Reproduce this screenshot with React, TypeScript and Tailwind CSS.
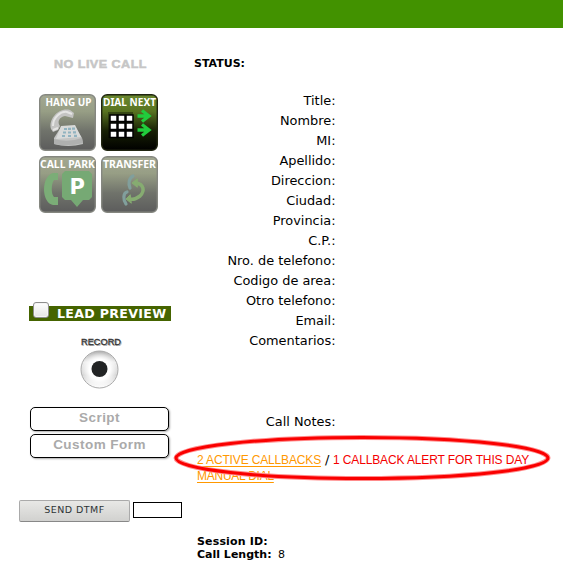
import React from "react";

const fields = ["Title:", "Nombre:", "MI:", "Apellido:", "Direccion:", "Ciudad:", "Provincia:", "C.P.:", "Nro. de telefono:", "Codigo de area:", "Otro telefono:", "Email:", "Comentarios:"];

function Tile({ id, label, width, active = false, children }: { id: string; label: string; width: number; active?: boolean; children: React.ReactNode }) {
  return (
    <svg className="block h-[57px] w-[57px]" viewBox="0 0 57 57">
      <defs>
        <linearGradient id={id} x1="0" y1="0" x2="0" y2="1">
          <stop offset="0" stopColor={active ? "#6b8930" : "#a3a892"} />
          <stop offset=".3" stopColor={active ? "#587321" : "#979e85"} />
          <stop offset=".65" stopColor={active ? "#172004" : "#70736b"} />
          <stop offset="1" stopColor={active ? "#000000" : "#5c5c5c"} />
        </linearGradient>
      </defs>
      <rect x=".7" y=".7" width="55.6" height="55.6" rx="5.5" fill={`url(#${id})`} stroke={active ? "#202511" : "#858780"} strokeWidth="1.4" />
      {children}
      <text x={(57 - width) / 2 + (id === "hang" ? 1 : 0)} y="12" textLength={width} lengthAdjust="spacingAndGlyphs" fontSize="10.3" fontWeight="bold" fill="white" className="font-['Noto_Sans','DejaVu_Sans',sans-serif]">{label}</text>
    </svg>
  );
}

function Telephone() {
  return (
    <g>
      <path d="M22 33 L36 32 L43 44 L44 50 Q29 54 15 50 L15 44Z" fill="#c3c4c3" />
      <path d="M22 32 L36 31 L42 43 L17 45Z" fill="#d8dad9" />
      <path d="M15 45 Q29 49 43 44 L44 49 Q30 53 15 50Z" fill="#afb0af" />
      <path d="M12 35 C9 25 20 13 31 16 L35 19 L34 24 L26 22 C20 23 18 28 21 32 L19 36 L14 38Z" fill="#c4c4c3" />
      <path d="M14 32 C14 23 22 17 28 18 L33 20 M14 36L19 34" fill="none" stroke="#e5e5e4" strokeWidth="2" />
      <path d="M25 35h3m1-.2h3m1-.2h3M24 38.5h3m2 0h3m2-.2h3M23 42h3m3 0h3m3-.2h3" stroke="#91b3c0" strokeWidth="2.2" />
    </g>
  );
}

function Arrow({ y }: { y: number }) {
  return <path d={`M36.5 ${y}h9M41 ${y - 5.5}l7 5.5-7 5.5`} fill="none" stroke="#21cc3c" strokeWidth="3.3" strokeLinejoin="miter" />;
}

export default function App() {
  return (
    <div className="relative h-[588px] w-[563px] overflow-hidden bg-white font-['DejaVu_Sans',sans-serif] text-black">
      <header className="h-7 bg-[#429200]" />
      <main className="flex h-[560px]">
        <aside className="w-[194px] shrink-0">
          <div className="flex h-[66px] pl-[54px] pt-[29px]">
            <span className="h-[14px] origin-left scale-x-[1.145] whitespace-nowrap font-['Liberation_Sans',Arial,sans-serif] text-[11px] leading-[14px] font-black tracking-[.4px] text-[#c6c6c6] [-webkit-text-stroke:0.5px_#c6c6c6]">NO LIVE CALL</span>
          </div>
          <div className="ml-[39px] grid w-[119px] grid-cols-2 gap-[5px]">
            <Tile id="hang" label="HANG UP" width={46}><Telephone /></Tile>
            <Tile id="dial" label="DIAL NEXT" width={53} active>
              <path d="M7 18h25v26H7z" fill="#000" opacity=".35" />
              {[0, 1, 2].map((r) => [0, 1, 2].map((c) => <rect key={`${r}-${c}`} x={9 + c * 8} y={21 + r * 8} width="7" height="6.5" fill="white" stroke="black" strokeWidth="1.5" />))}
              <Arrow y={22} /><Arrow y={36} />
            </Tile>
            <Tile id="park" label="CALL PARK" width={55}>
              <path d="M19 17h-5C2 20 2 47 14 49h5v-8h-4c-3-3-3-13 0-17h4Z" fill="#7bad77" />
              <path d="M26 15h24l3 3v23l-3 3h-6l-6 7-6-7h-6l-3-3V18z" fill="#76a974" />
              <text x="30.5" y="38" fontSize="21" fontWeight="bold" fill="white" className="font-['DejaVu_Sans',sans-serif]">P</text>
            </Tile>
            <Tile id="transfer" label="TRANSFER" width={53}>
              <g fill="none" strokeLinecap="round">
                <path d="M32 20c-4 2-5 8-3 12M26 36c-4 1-4 8-1 12" stroke="#819f9c" strokeWidth="3.2" />
                <path d="M35 27c8 1 9 8 4 13-4 3-7 4-10 3" stroke="#86ac71" strokeWidth="3.5" />
                <path d="m36 23-5 4 5 4ZM29 39l-4 4 5 4Z" fill="#86ac71" stroke="#86ac71" strokeWidth="1" />
              </g>
            </Tile>
          </div>
          <div className="mt-[93px] ml-[29px] flex h-[15px] w-[142px] items-center bg-[#456400]">
            <div className="-mt-[7px] ml-[4px] h-4 w-4 shrink-0 rounded-[3px] border border-[#8e8e8e] bg-linear-to-b from-white to-[#e5e5e5] shadow-[inset_0_0_0_1px_#f5f5f5]" />
            <span className="ml-[8px] origin-left scale-x-[1.05] whitespace-nowrap pt-px text-[12px] leading-[15px] font-bold tracking-[.3px] text-white">LEAD PREVIEW</span>
          </div>
          <div className="mt-[15px] ml-[79px] w-[41px]">
            <svg className="block h-[54px] w-[42px] overflow-visible" viewBox="0 0 42 54">
              <defs>
                <linearGradient id="record" x1="0" y1="0" x2="0" y2="1"><stop stopColor="#b4b4b4" /><stop offset=".3" stopColor="#eee" /><stop offset=".65" stopColor="#d9d9d9" /><stop offset="1" stopColor="#fff" /></linearGradient>
                <radialGradient id="glow"><stop offset=".6" stopColor="#fff" /><stop offset="1" stopColor="#fff" stopOpacity="0" /></radialGradient>
              </defs>
              <text x="3" y="10" textLength="40" lengthAdjust="spacingAndGlyphs" fontSize="9.5" fill="#aaa" className="font-['Liberation_Sans',sans-serif]">RECORD</text>
              <text x="2" y="9" textLength="40" lengthAdjust="spacingAndGlyphs" fontSize="9.5" fill="#333" stroke="#333" strokeWidth=".3" className="font-['Liberation_Sans',sans-serif]">RECORD</text>
              <circle cx="20.5" cy="33.5" r="18.5" fill="url(#record)" stroke="#aaa" />
              <circle cx="20.5" cy="33.5" r="17" fill="url(#glow)" /><circle cx="20.5" cy="33" r="8" fill="#222425" />
            </svg>
          </div>
          <div className="mt-[17px] ml-[30px] flex flex-col gap-[3px]">
            {["Script", "Custom Form"].map((name) => <div key={name} className="flex h-6 w-[139px] items-center justify-center rounded-[5px] border border-black bg-white pb-[2px] font-['Liberation_Sans',Arial,sans-serif] text-[13.5px] leading-4 font-bold tracking-[.45px] text-[#aaa] shadow-[1px_1px_2px_#aaa]">{name}</div>)}
          </div>
          <div className="mt-[42px] ml-[19px] flex items-start">
            <div className="flex h-[22px] w-[111px] items-center justify-center rounded-[2px] border border-[#aaa] border-b-[#888] bg-linear-to-b from-[#e8e8e6] to-[#d1d1cf] pb-px text-[9.5px] tracking-[.45px] text-[#2e3436]">SEND DTMF</div>
            <div className="mt-[2px] ml-[3px] h-4 w-[49px] border border-black bg-white" />
          </div>
        </aside>
        <section className="flex min-w-0 flex-1 flex-col">
          <div className="mt-[29px] h-[14px] text-[11px] leading-[14px] font-bold">STATUS:</div>
          <div className="mt-[20px] w-[142px] pr-[.5px] text-right text-[12.9px] leading-5">{fields.map((label) => <div key={label} className="h-5">{label}</div>)}</div>
          <div className="mt-[61px] h-5 w-[142px] pr-[.5px] text-right text-[12.9px] leading-5">Call Notes:</div>
          <div className="mt-[20px] ml-[3px] whitespace-nowrap font-['Liberation_Sans',Arial,sans-serif] text-[12px] leading-4">
            <div className="flex h-4"><span className="w-[124px] tracking-[-.15px] text-[#ff9800] underline underline-offset-2">2 ACTIVE CALLBACKS</span><span className="ml-[4px] w-[4px] font-['DejaVu_Sans',sans-serif] text-[13px]">/</span><span className="ml-[4px] tracking-[-.13px] text-[#f40000]">1 CALLBACK ALERT FOR THIS DAY</span></div>
            <div className="h-4 text-[#ff9800]"><span className="tracking-[-.25px] underline underline-offset-2">MANUAL DIAL</span></div>
          </div>
          <div className="mt-[51px] ml-[3px] text-[11px] leading-[13px]"><div className="font-bold tracking-[.15px]">Session ID:</div><div><b>Call Length:</b><span className="ml-[3px]"> 8</span></div></div>
        </section>
      </main>
      <svg className="pointer-events-none absolute top-[433px] left-[171px] h-[50px] w-[382px]" viewBox="0 0 382 50">
        <ellipse cx="191" cy="25" rx="186" ry="20.5" fill="none" stroke="#ff8b8b" strokeWidth="5" />
        <ellipse cx="191" cy="25" rx="186" ry="20.5" fill="none" stroke="#fa0000" strokeWidth="3" />
      </svg>
    </div>
  );
}
